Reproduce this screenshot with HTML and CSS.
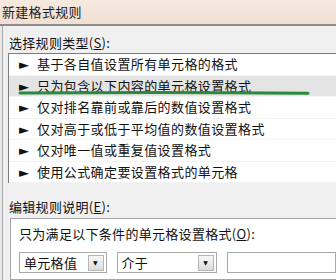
FILE: index.html
```html
<!DOCTYPE html>
<html lang="zh-CN">
<head>
  <meta charset="UTF-8">
  <title>新建格式规则</title>
  <link rel="stylesheet" href="styles.css">
</head>
<body>
  <div class="titlebar">新建格式规则</div>
  <div class="window">
    <div class="label label-type">选择规则类型(<u>S</u>):</div>
    <div class="listbox">
      <div class="item"><span class="arrow">►</span>基于各自值设置所有单元格的格式</div>
      <div class="item selected"><span class="arrow">►</span>只为包含以下内容的单元格设置格式</div>
      <div class="item"><span class="arrow">►</span>仅对排名靠前或靠后的数值设置格式</div>
      <div class="item"><span class="arrow">►</span>仅对高于或低于平均值的数值设置格式</div>
      <div class="item"><span class="arrow">►</span>仅对唯一值或重复值设置格式</div>
      <div class="item"><span class="arrow">►</span>使用公式确定要设置格式的单元格</div>
      <!-- hand-drawn green underline -->
      <svg class="mark" width="300" height="8" viewBox="0 0 300 8">
        <path d="M2 4 C 60 3.5, 160 3, 290 4.2" stroke="#2b8a3e" stroke-width="3" fill="none" stroke-linecap="round"/>
      </svg>
    </div>

    <div class="label label-edit">编辑规则说明(<u>E</u>):</div>
    <div class="rulebox">
      <div class="rule-title">只为满足以下条件的单元格设置格式(<u>O</u>):</div>
      <div class="controls">
        <div class="combo combo-first"><span>单元格值</span><span class="drop">▼</span></div>
        <div class="combo combo-second"><span>介于</span><span class="drop">▼</span></div>
        <div class="combo combo-input"></div>
      </div>
    </div>
  </div>
</body>
</html>
```

FILE: styles.css
```css
body {
  margin: 0;
  width: 336px;
  height: 280px;
  overflow: hidden;
  background-color: #e9e9e9;
  font-family: "Noto Sans CJK SC", "Liberation Sans", sans-serif;
  font-size: 13px;
  color: #111;
}

u {
  text-decoration: underline;
}

.titlebar {
  height: 24px;
  line-height: 24px;
  padding-left: 2px;
  background: linear-gradient(to bottom, #f6e9df, #f1dfd2);
  border-bottom: 2px solid #8d8d8d;
  letter-spacing: 0.3px;
  color: #1a1a1a;
}

.window {
  margin-left: 2px;
  height: 254px;
  border-left: 1px solid #a8a8a8;
  background-color: #f0f0f0;
  padding-left: 5px;
}

.label {
  height: 27px;
  line-height: 34px;
  padding-left: 1px;
  letter-spacing: 0.3px;
}

.listbox {
  position: relative;
  width: 340px;
  height: 128px;
  background: white;
  border: 1px solid #7d7d7d;
  border-right: none;
}

.item {
  height: 20.5px;
  line-height: 20px;
  border-bottom: 1px solid #f3f3f3;
  letter-spacing: 0.4px;
  white-space: nowrap;
}

.item.selected {
  background-color: #e4e4e4;
}

.arrow {
  display: inline-block;
  width: 18px;
  margin-left: 10px;
  font-size: 13px;
  font-family: "DejaVu Sans", sans-serif;
  vertical-align: 0;
}

.mark {
  position: absolute;
  left: 9px;
  top: 35px;
}

.label-edit {
  height: 35px;
  line-height: 48px;
}

.rulebox {
  margin-left: 2px;
  height: 60px;
  background: white;
  border: 1px solid #a5a5a5;
  border-right: none;
  padding-left: 8px;
}

.rule-title {
  height: 33px;
  line-height: 29px;
  letter-spacing: 0.3px;
  white-space: nowrap;
}

.controls {
  display: flex;
  gap: 10px;
}

.combo {
  height: 21px;
  border: 1px solid #a9a9a9;
  display: flex;
  align-items: center;
  justify-content: space-between;
  padding-left: 4px;
  padding-right: 2px;
  letter-spacing: 0.3px;
  box-sizing: border-box;
}

.combo-first {
  width: 96px;
}

.combo-second {
  width: 110px;
}

.combo-input {
  width: 120px;
}

.drop {
  width: 14px;
  height: 14px;
  border: 1px solid #b5b5b5;
  background: linear-gradient(to bottom, #f7f7f7, #dcdcdc);
  font-size: 6px;
  line-height: 14px;
  text-align: center;
  font-family: "DejaVu Sans", sans-serif;
  color: #111;
}
```
